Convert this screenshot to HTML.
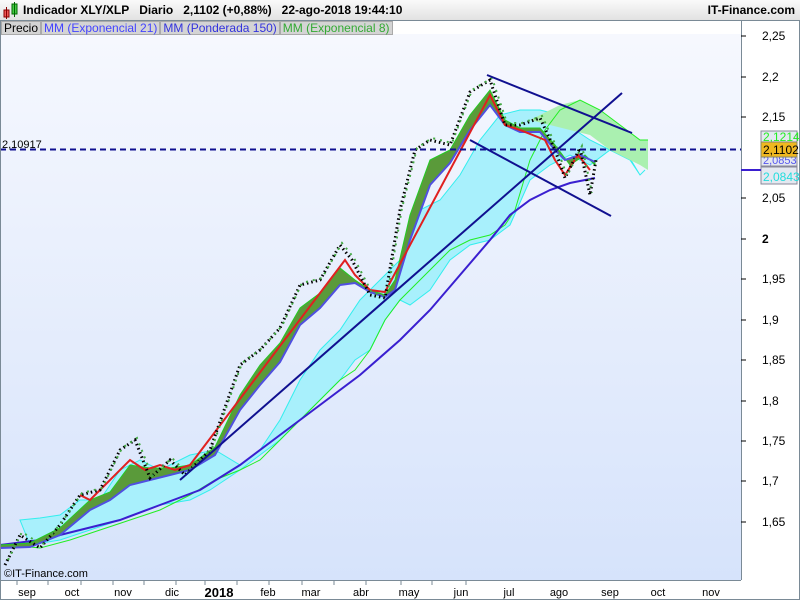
<!DOCTYPE html>
<html><head><meta charset="utf-8"><style>
body{margin:0;width:800px;height:600px;overflow:hidden;font-family:"Liberation Sans",sans-serif;background:#fff}
#hdr{position:absolute;left:0;top:0;width:800px;height:20px;background:linear-gradient(#fafafa,#e2e2e2);font-size:12px;font-weight:bold;color:#000}
#leg{position:absolute;top:21px;left:1px;height:14px;font-size:12px;display:flex}
#leg span{background:#d4d4d4;border:1px solid #aaa;padding:0 2px;line-height:13px}
</style></head><body>
<div id="hdr">
<svg width="20" height="20" style="position:absolute;left:3px;top:2px"><rect x="1" y="8" width="5" height="7" fill="#e55" stroke="#800"/><line x1="3.5" y1="5" x2="3.5" y2="17" stroke="#800"/><rect x="9" y="2" width="5" height="10" fill="#4c4" stroke="#060"/><line x1="11.5" y1="0" x2="11.5" y2="15" stroke="#060"/></svg>
<span style="position:absolute;left:23px;top:3px">Indicador XLY/XLP&nbsp;&nbsp;&nbsp;Diario&nbsp;&nbsp;&nbsp;2,1102 (+0,88%)&nbsp;&nbsp;&nbsp;22-ago-2018 19:44:10</span>
<span style="position:absolute;right:5px;top:3px">IT-Finance.com</span>
</div>
<svg width="800" height="580" style="position:absolute;left:0;top:20px" viewBox="0 20 800 580">
<defs><linearGradient id="bg" x1="0" y1="0" x2="0" y2="1"><stop offset="0" stop-color="#f6f8fe"/><stop offset="1" stop-color="#d6e3fb"/></linearGradient></defs>
<rect x="0" y="34" width="741" height="546" fill="url(#bg)"/>
<rect x="0" y="580" width="800" height="20" fill="#fff"/>
<line x1="741.5" y1="20" x2="741.5" y2="580" stroke="#7a8a96"/>
<line x1="0" y1="580.5" x2="741" y2="580.5" stroke="#7a8a96"/>
<polygon fill="#a8f0fc" stroke="#3ee" stroke-width="1" points="20,520 40,518 60,515 80,500 100,500 120,470 140,460 160,470 190,455 215,450 240,465 260,450 280,420 290,400 300,380 320,350 340,330 360,300 380,280 390,270 400,260 420,210 440,200 460,175 480,140 500,115 520,110 540,110 560,115 575,130 590,140 610,150 625,150 640,175 645,170 640,175 630,160 610,150 590,165 570,155 550,165 530,180 510,225 490,240 470,245 450,260 430,290 410,305 400,300 385,320 370,350 355,360 340,380 320,400 300,420 280,440 260,455 240,470 210,490 190,500 160,505 120,520 90,530 60,540 30,545"/>
<polygon fill="#aaf0b0" points="530,120 560,105 580,100 600,110 620,125 640,140 648,140 648,170 640,165 630,160 610,150 590,135 570,130 550,125"/>
<polyline fill="none" stroke="#22ee22" points="10,545 40,548 70,540 100,530 130,520 160,510 190,495 215,480 240,470 260,460 280,440 300,420 320,400 340,380 355,370 370,350 385,320 400,300 410,290 430,270 450,250 470,240 490,235 505,225 515,210 530,160 545,130 560,110 580,100 600,110 620,125 640,140 648,140"/>
<polyline fill="none" stroke="#3a1fd0" stroke-width="2" points="0,545 40,540 80,530 120,520 160,505 200,490 240,465 280,435 320,405 360,375 400,340 430,310 460,275 490,240 510,215 530,200 550,190 570,183 595,178"/>
<polygon fill="#5a9a3a" stroke="#2c2" stroke-width="1" points="0,545 30,543 60,528 90,500 110,492 130,465 150,468 170,468 190,465 215,447 240,395 260,365 280,343 300,308 320,293 340,268 355,280 370,290 385,295 395,280 410,215 430,160 450,150 470,115 490,90 505,120 520,128 540,128 555,145 570,165 585,155 595,165 595,162 580,155 565,160 555,150 540,132 520,132 505,125 490,105 470,130 450,163 430,185 410,240 395,290 385,297 370,292 355,283 340,285 320,308 300,325 280,362 260,385 240,410 215,455 190,470 170,475 150,480 130,485 110,500 90,510 60,535 30,547 0,548"/>
<polyline fill="none" stroke="#5050e0" stroke-width="2" points="0,548 30,547 60,535 90,510 110,500 130,485 150,480 170,475 190,470 215,455 240,410 260,385 280,362 300,325 320,308 340,285 355,283 370,292 385,297 395,290 410,240 430,185 450,163 470,130 490,105 505,125 520,132 540,132 555,150 565,160 580,155 595,162"/>
<polyline fill="none" stroke="#e02020" stroke-width="2" points="80,495 90,500 100,490 130,460 145,470 160,465 175,470 190,465 345,260 355,275 370,290 385,292 490,95 505,125 520,130 545,140 555,160 565,175 578,155 590,170"/>
<polyline fill="none" stroke="#000" stroke-width="3" stroke-dasharray="1.5 3" points="5,565 20,535 40,548 60,525 80,495 100,490 120,450 135,440 150,478 170,460 185,475 210,450 240,365 260,350 280,328 300,285 320,280 340,245 352,260 370,295 385,298 400,210 415,150 430,140 450,145 470,92 490,80 505,125 520,125 540,118 555,150 565,178 580,148 590,195 596,160"/>
<polyline fill="none" stroke="#4a4" stroke-width="2" stroke-dasharray="2 5" points="8,560 22,532 42,545 62,522 82,493 102,488 122,448 137,438 152,476 172,458 187,473 212,448 242,363 262,348 282,326 302,283 322,278 342,243 354,258 372,293 387,296 402,208 417,148 432,138 452,143 472,90 492,78 507,123 522,123 542,116 557,148 567,176 582,146 592,193"/>
<g stroke="#101090" stroke-width="2"><line x1="180" y1="480" x2="622" y2="93"/><line x1="487" y1="75" x2="632" y2="133"/><line x1="470" y1="140" x2="611" y2="216"/></g>
<line x1="0" y1="149.5" x2="741" y2="149.5" stroke="#101090" stroke-width="2" stroke-dasharray="6 4"/>
<text x="2" y="148" font-size="11" fill="#000">2,10917</text>
<text x="4" y="577" font-size="11" fill="#000">©IT-Finance.com</text>
<g font-size="12" fill="#000">
<g stroke="#000"><line x1="741" y1="36" x2="746" y2="36"/><line x1="741" y1="77" x2="746" y2="77"/><line x1="741" y1="117" x2="746" y2="117"/><line x1="741" y1="198" x2="746" y2="198"/><line x1="741" y1="239" x2="746" y2="239"/><line x1="741" y1="279" x2="746" y2="279"/><line x1="741" y1="320" x2="746" y2="320"/><line x1="741" y1="360" x2="746" y2="360"/><line x1="741" y1="401" x2="746" y2="401"/><line x1="741" y1="441" x2="746" y2="441"/><line x1="741" y1="481" x2="746" y2="481"/><line x1="741" y1="522" x2="746" y2="522"/></g>
<text x="762" y="40">2,25</text><text x="762" y="81">2,2</text><text x="762" y="121">2,15</text><text x="762" y="202">2,05</text><text x="762" y="243" font-weight="bold">2</text><text x="762" y="283">1,95</text><text x="762" y="324">1,9</text><text x="762" y="364">1,85</text><text x="762" y="405">1,8</text><text x="762" y="445">1,75</text><text x="762" y="485">1,7</text><text x="762" y="526">1,65</text>
</g>
<rect x="761" y="131" width="36" height="12" fill="#e4e8f0" stroke="#889"/><text x="763" y="141" font-size="12" fill="#2e2">2,1214</text>
<rect x="761" y="154" width="36" height="12" fill="#e4e8f0" stroke="#889"/><text x="763" y="164" font-size="11" fill="#55e">2,0853</text>
<rect x="761" y="167" width="36" height="17" fill="#e4e8f0" stroke="#889"/><text x="763" y="181" font-size="12" fill="#2dd">2,0843</text>
<rect x="761" y="142" width="36" height="15" fill="#f0b820" stroke="#886"/><text x="763" y="154" font-size="12" fill="#000">2,1102</text>
<line x1="741" y1="170" x2="761" y2="170" stroke="#3a1fd0" stroke-width="2"/>
<g stroke="#7a8a96"><line x1="17" y1="581" x2="17" y2="585"/><line x1="48" y1="581" x2="48" y2="585"/><line x1="81" y1="581" x2="81" y2="585"/><line x1="113" y1="581" x2="113" y2="585"/><line x1="144" y1="581" x2="144" y2="585"/><line x1="176" y1="581" x2="176" y2="585"/><line x1="205" y1="581" x2="205" y2="585"/><line x1="237" y1="581" x2="237" y2="585"/><line x1="269" y1="581" x2="269" y2="585"/><line x1="302" y1="581" x2="302" y2="585"/><line x1="334" y1="581" x2="334" y2="585"/><line x1="366" y1="581" x2="366" y2="585"/><line x1="401" y1="581" x2="401" y2="585"/><line x1="432" y1="581" x2="432" y2="585"/><line x1="466" y1="581" x2="466" y2="585"/></g>
<g font-size="11" fill="#000" text-anchor="middle"><text x="27" y="596">sep</text><text x="72" y="596">oct</text><text x="123" y="596">nov</text><text x="172" y="596">dic</text><text x="219" y="597" font-weight="bold" font-size="13">2018</text><text x="268" y="596">feb</text><text x="311" y="596">mar</text><text x="361" y="596">abr</text><text x="409" y="596">may</text><text x="461" y="596">jun</text><text x="509" y="596">jul</text><text x="559" y="596">ago</text><text x="610" y="596">sep</text><text x="658" y="596">oct</text><text x="711" y="596">nov</text></g>
<rect x="0.5" y="20.5" width="799" height="579" fill="none" stroke="#7a8a96"/>
</svg>
<div id="leg"><span style="color:#000">Precio</span><span style="color:#44f">MM (Exponencial 21)</span><span style="color:#33d">MM (Ponderada 150)</span><span style="color:#3a3">MM (Exponencial 8)</span></div>
</body></html>
